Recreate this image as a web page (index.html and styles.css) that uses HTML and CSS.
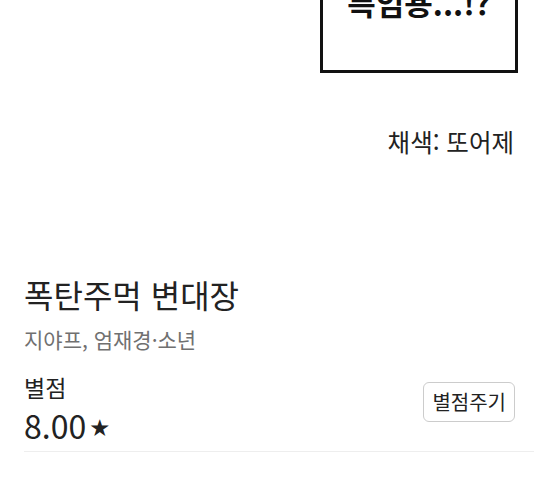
FILE: index.html
```html
<!DOCTYPE html>
<html lang="ko">
  <head>
    <meta charset="UTF-8" />
    <meta name="viewport" content="width=device-width, initial-scale=1.0" />
    <title>폭탄주먹 변대장</title>
    <link rel="stylesheet" href="styles.css">
  </head>
  <body>
    <section class="panel">
      <div class="bubble">특임용...!?</div>
      <p class="credit">채색: 또어제</p>
    </section>

    <main class="info">
      <h1 class="title">폭탄주먹 변대장</h1>
      <p class="authors">지야프, 엄재경·소년</p>

      <div class="ratingRow">
        <div class="rating">
          <span class="label">별점</span>
          <span class="score">8.00<span class="star">★</span></span>
        </div>
        <button class="rateBtn">별점주기</button>
      </div>
    </main>
  </body>
</html>
```

FILE: styles.css
```css
* {
  margin: 0;
  padding: 0;
  box-sizing: border-box;
}

body {
  background: #fff;
  color: #222;
  font-family: "Noto Sans CJK KR", "Noto Sans", sans-serif;
  overflow: hidden;
}

.panel {
  display: flex;
  flex-direction: column;
  align-items: flex-end;
  height: 190px;
  overflow: hidden;
}

.bubble {
  width: 198px;
  height: 110px;
  margin-top: -37px;
  margin-right: 16px;
  border: 3px solid #111;
  padding-top: 18px;
  text-align: center;
  font-size: 31px;
  font-weight: 700;
  color: #111;
  line-height: 36px;
}

.credit {
  margin-top: 53px;
  margin-right: 20px;
  font-size: 24.5px;
  line-height: 32px;
  color: #222;
}

.info {
  padding-left: 24px;
  padding-top: 83px;
}

.title {
  font-size: 32px;
  font-weight: 400;
  line-height: 42px;
  color: #222;
}

.authors {
  margin-top: 10px;
  font-size: 21px;
  line-height: 28px;
  color: #707070;
}

.ratingRow {
  display: flex;
  justify-content: space-between;
  align-items: flex-start;
  margin-top: 18px;
  padding: 0 19px 3px 0;
  border-bottom: 1px solid #eee;
}

.rating {
  display: flex;
  flex-direction: column;
}

.label {
  font-size: 23px;
  line-height: 33px;
}

.score {
  font-size: 32px;
  line-height: 42px;
}

.star {
  font-size: 19px;
  margin-left: 4px;
  vertical-align: 4px;
}

.rateBtn {
  margin-top: 11px;
  padding: 5px 8px;
  border: 1px solid #ccc;
  border-radius: 6px;
  background: #fff;
  color: #222;
  font-family: inherit;
  font-size: 20px;
  line-height: 28px;
  cursor: pointer;
}
```
